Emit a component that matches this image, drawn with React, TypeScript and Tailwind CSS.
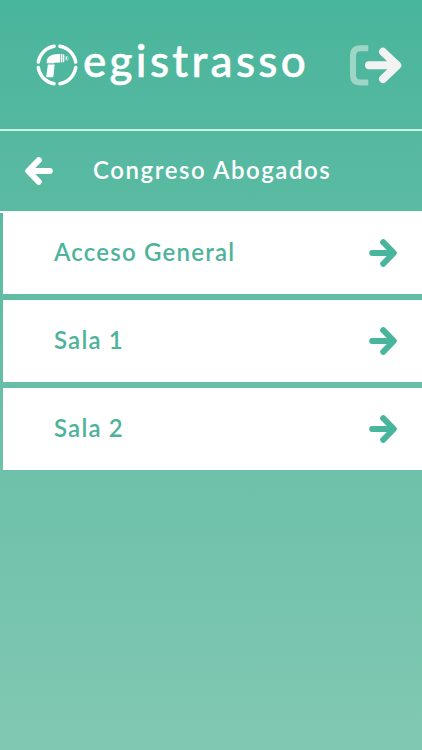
interface ArrowProps {
  className?: string
  flip?: boolean
}

const rooms = ['Acceso General', 'Sala 1', 'Sala 2']

function Arrow({ className = '', flip = false }: ArrowProps) {
  return (
    <svg viewBox="0 0 30 30" className={`h-[30px] w-[30px] shrink-0 ${flip ? '-scale-x-100' : ''} ${className}`}>
      <path
        d="M4.2 15H24.4M15.2 4.2L25.8 15L15.2 25.8"
        fill="none"
        stroke="currentColor"
        strokeWidth="6"
        strokeLinecap="round"
        strokeLinejoin="round"
      />
    </svg>
  )
}

function LogoMark() {
  return (
    <svg viewBox="0 0 42 42" className="h-[42px] w-[42px] shrink-0">
      {/* Ring */}
      <g fill="none" stroke="white" strokeWidth="3.5" strokeLinecap="round">
        <path d="M23.9 2.3A19.1 19.1 0 0 1 39.7 18.1" />
        <path d="M39.7 23.6A19.1 19.1 0 0 1 23.9 39.7" />
        <path d="M18.1 39.7A19.1 19.1 0 0 1 2.3 23.6" />
        <path d="M2.3 18.1A19.1 19.1 0 0 1 18.1 2.3" />
      </g>
      {/* Scanner */}
      <g fill="white">
        <path d="M10.8 18.8V17C10.8 13.2 15.5 10.4 19.5 10.2L24 10V18.4L18 18.8Z" />
        <path d="M24.7 10H26.2V18.4H24.7Z" />
        <path d="M26.7 10.2H27.6Q28.3 10.2 28.3 11V17.4Q28.3 18.2 27.6 18.2H26.7Z" />
        <path d="M11.9 20.6H18.7L17.4 32.2Q17.3 33.2 16.3 33.2H11.2Q10.1 33.2 10.3 32Z" />
        <path d="M10.8 17.5H18V19.3H10.8Z" />
      </g>
      <path d="M29.8 12.4Q31.2 14.3 29.8 16.2" fill="none" stroke="white" strokeWidth="1.2" />
      <path d="M31.4 11.8Q33.2 14.3 31.4 16.8" fill="none" stroke="white" strokeWidth="0.8" opacity="0.6" />
    </svg>
  )
}

function LogoutIcon() {
  return (
    <svg viewBox="0 0 54 42" className="h-[42px] w-[54px] shrink-0">
      <path d="M19.3 4.3H11.5Q4 4.3 4 11.8V31Q4 38.5 11.5 38.5H19.3" fill="none" stroke="#9dd5c7" strokeWidth="6" />
      <path
        d="M20 21.3H48M34 7.8L48.3 21.3L34 35"
        fill="none"
        stroke="#f2f3f2"
        strokeWidth="8"
        strokeLinecap="round"
        strokeLinejoin="round"
      />
    </svg>
  )
}

export default function App() {
  return (
    <div className="flex h-[750px] w-full flex-col bg-linear-to-b from-[#49b59c] to-[#81c8b2] font-['Lato',sans-serif]">
      <header className="flex h-[131px] items-start justify-between border-b-2 border-[#cdf2e7] pt-11 pr-[19px] pl-9 text-white">
        <div className="flex items-start">
          <LogoMark />
          <span className="-mt-[11px] ml-[5px] text-[44px] leading-[54px] font-medium tracking-[3.3px] whitespace-nowrap [-webkit-text-stroke:0.5px_white]">
            egistrasso
          </span>
        </div>
        <button aria-label="Salir">
          <LogoutIcon />
        </button>
      </header>

      <div className="flex h-[82px] items-center border-b-2 border-[#f4fcf8] pl-6 text-white">
        <button aria-label="Volver">
          <Arrow flip />
        </button>
        <h1 className="ml-[39px] pb-[3px] text-[24px] leading-8 font-semibold tracking-[1.55px] whitespace-nowrap">
          Congreso Abogados
        </h1>
      </div>

      <ul className="flex flex-col gap-[6px] pl-[3px]">
        {rooms.map(room => (
          <li key={room} className="h-[82px] bg-[#fefffe] first:h-[81px]">
            <button className="flex h-full w-full items-center justify-between pr-[24px] pb-px pl-[51px] text-[#4eb39a]">
              <span className="pb-[2px] text-[24px] leading-8 font-semibold tracking-[1.2px]">{room}</span>
              <Arrow className="text-[#49b59c]" />
            </button>
          </li>
        ))}
      </ul>
    </div>
  )
}
